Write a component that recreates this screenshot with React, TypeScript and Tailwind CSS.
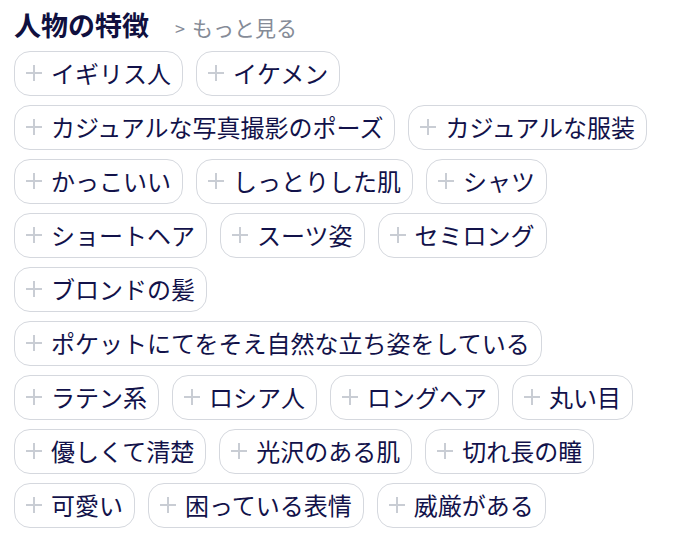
const tags: string[][] = [
  ["イギリス人", "イケメン"],
  ["カジュアルな写真撮影のポーズ", "カジュアルな服装"],
  ["かっこいい", "しっとりした肌", "シャツ"],
  ["ショートヘア", "スーツ姿", "セミロング"],
  ["ブロンドの髪"],
  ["ポケットにてをそえ自然な立ち姿をしている"],
  ["ラテン系", "ロシア人", "ロングヘア", "丸い目"],
  ["優しくて清楚", "光沢のある肌", "切れ長の瞳"],
  ["可愛い", "困っている表情", "威厳がある"],
];

function PlusIcon() {
  return (
    <svg width="18" height="18" viewBox="0 0 18 18" className="shrink-0">
      <path d="M9 1v16M1 9h16" stroke="#c9cdd4" strokeWidth="2" fill="none" />
    </svg>
  );
}

function Tag({ label }: { label: string }) {
  return (
    <button className="flex h-[45px] items-center gap-[8px] rounded-[16px] border border-[#d5d8de] bg-white pl-[10px] pr-[11px] text-[24px] leading-none text-[#12124a]">
      <PlusIcon />
      <span>{label}</span>
    </button>
  );
}

export default function App() {
  return (
    <div
      className="min-h-screen bg-white px-[14px] pt-[7px]"
      style={{ fontFamily: '"Noto Sans CJK JP", "Noto Sans", sans-serif' }}
    >
      <div className="flex items-baseline gap-[26px]">
        <h2 className="text-[27px] font-bold leading-[36px] text-[#10103f]">
          人物の特徴
        </h2>
        <a className="text-[21px] text-[#858b97]">
          <span className="mr-[7px] text-[18px]">&gt;</span>もっと見る
        </a>
      </div>
      <div className="mt-[7px] flex flex-wrap gap-x-[13px] gap-y-[9px]">
        {tags.flat().map((t) => (
          <Tag key={t} label={t} />
        ))}
      </div>
    </div>
  );
}
